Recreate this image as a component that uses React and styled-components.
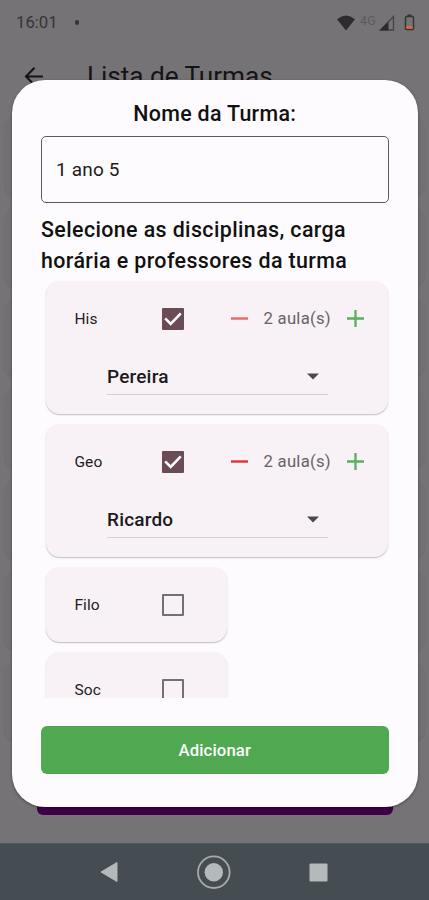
import React from 'react';
import styled, { createGlobalStyle } from 'styled-components';

const GlobalStyle = createGlobalStyle`
  * { box-sizing: border-box; }
  body { margin: 0; background: #767376; font-family: Roboto, sans-serif; }
  button, input { font-family: inherit; }
`;

const Screen = styled.div`
  position: relative;
  width: 429px;
  height: 900px;
  overflow: hidden;
  display: flex;
  flex-direction: column;
  background: #767376;
`;

const StatusBar = styled.div`
  height: 45px;
  flex: none;
  display: flex;
  align-items: center;
  padding: 0 14px 0 16px;
  color: #353336;
  font-size: 16.7px;
  letter-spacing: 0;
`;

const Dot = styled.span`
  width: 4.5px;
  height: 4.5px;
  border-radius: 50%;
  background: #353336;
  margin-left: 17px;
`;

const StatusIcons = styled.div`
  margin-left: auto;
  display: flex;
  align-items: center;
`;

const Network = styled.span`
  font-size: 12.5px;
  color: #5c595c;
  margin: -5px 3px 0 5px;
  letter-spacing: 0.2px;
`;

const BatterySlot = styled.span`
  display: flex;
  margin-left: 9px;
`;

const AppBar = styled.div`
  height: 62px;
  flex: none;
  display: flex;
  align-items: center;
  padding: 0 24px;
  color: #161316;
`;

const AppTitle = styled.h1`
  margin: 0 0 0 43px;
  font-size: 26.2px;
  line-height: 30px;
  font-weight: 400;
  letter-spacing: -0.05px;
`;

const ClassList = styled.div`
  flex: 1;
  min-height: 0;
  overflow: hidden;
  display: flex;
  flex-direction: column;
  gap: 10px;
  padding: 9px 4px 0;
`;

const ClassCard = styled.div`
  height: 80.8px;
  flex: none;
  border-radius: 14px;
  background: #727072;
  box-shadow: 0 1px 1px #6b686b;
`;

const SaveBar = styled.div`
  height: 57px;
  flex: none;
  margin: 0 36px 28px 36.5px;
  border-radius: 6px;
  background: #3f0047;
`;

const NavBar = styled.nav`
  height: 57px;
  flex: none;
  display: flex;
  align-items: center;
  justify-content: space-between;
  padding: 0 101px 0 100px;
  background: #454d52;
  border-top: 1px solid #4d5a59;
`;

const Overlay = styled.div`
  position: absolute;
  inset: 0;
  padding: 79.5px 11.5px 93px 12px;
  display: flex;
`;

const Dialog = styled.section`
  flex: 1;
  display: flex;
  flex-direction: column;
  padding: 21px 29px 33px;
  border-radius: 33px;
  background: #fdfbfe;
  box-shadow: 0 1px 3px rgba(0, 0, 0, 0.4);
`;

const DialogTitle = styled.h2`
  margin: 0;
  text-align: center;
  font-size: 21.4px;
  line-height: 26px;
  font-weight: 500;
  letter-spacing: 0.32px;
  color: #111;
  white-space: nowrap;
`;

const NameInput = styled.input`
  width: 100%;
  height: 67px;
  flex: none;
  margin-top: 9px;
  padding: 0 14px;
  border: 1.2px solid #5e5b5e;
  border-radius: 5px;
  background: transparent;
  font-size: 19px;
  letter-spacing: 0.18px;
  color: #1c1a1d;
  outline: none;
`;

const Prompt = styled.p`
  margin: 11px 0 0;
  font-size: 21.4px;
  line-height: 31px;
  font-weight: 500;
  letter-spacing: 0.39px;
  color: #111;
  white-space: nowrap;
`;

const Subjects = styled.div`
  height: 422px;
  flex: none;
  overflow: hidden;
  display: flex;
  flex-direction: column;
  align-items: flex-start;
  gap: 10px;
  padding: 5px 1px 0 5px;
`;

const SubjectCard = styled.article`
  width: ${(p) => (p.$open ? '100%' : '181px')};
  height: ${(p) => (p.$open ? '133px' : '75px')};
  flex: none;
  border-radius: 14px;
  background: #f8f2f6;
  box-shadow: 0 1px 1.5px rgba(0, 0, 0, 0.25);
`;

const SubjectRow = styled.div`
  height: 75px;
  display: flex;
  align-items: center;
  padding: 1.5px 0 0 28.5px;
`;

const SubjectName = styled.span`
  width: 87px;
  font-size: 15.5px;
  letter-spacing: 0.05px;
  color: #222024;
`;

const CheckBox = styled.span`
  width: 22px;
  height: 22px;
  flex: none;
  display: flex;
  border-radius: 1px;
  border: ${(p) => (p.$checked ? 'none' : '2px solid #737074')};
  background: ${(p) => (p.$checked ? '#6a4c57' : 'transparent')};
`;

const Stepper = styled.div`
  display: flex;
  align-items: center;
  margin-left: 47px;
`;

const Hours = styled.span`
  width: 68px;
  margin: 0 15px 0 16px;
  font-size: 16.7px;
  letter-spacing: 0.26px;
  color: #67636a;
  white-space: nowrap;
`;

const TeacherSelect = styled.div`
  width: 221px;
  height: 39px;
  margin: 0 0 0 61px;
  display: flex;
  align-items: center;
  justify-content: space-between;
  padding: 3px 9px 0 0;
  border-bottom: 1px solid #d5cfd4;
  font-size: 19px;
  font-weight: 500;
  letter-spacing: 0.18px;
  color: #1c1a1d;
`;

const AddButton = styled.button`
  width: 100%;
  height: 48px;
  flex: none;
  margin-top: auto;
  border: 0;
  border-radius: 6px;
  background: #50a951;
  color: #fff;
  font-size: 16.7px;
  font-weight: 500;
  letter-spacing: 0.12px;
`;

const WifiIcon = () => (
  <svg width="18" height="16" viewBox="0 0 18 16">
    <path d="M0 4.2Q9-3.2 18 4.2L9 15.5Z" fill="#2d2b2e" />
  </svg>
);

const SignalIcon = () => (
  <svg width="16" height="16" viewBox="0 0 16 16">
    <path d="M1.5 15H14.5V1.5Z" fill="none" stroke="#454346" strokeWidth="1.3" />
    <path d="M0.5 15.5H9.5V6.5Z" fill="#2d2b2e" />
  </svg>
);

const BatteryIcon = () => (
  <svg width="11" height="17" viewBox="0 0 11 17">
    <path d="M3.5 0.5h4v2h-4z" fill="#353336" />
    <rect x="1.5" y="2.5" width="8" height="13" rx="1" fill="none" stroke="#353336" strokeWidth="1.5" />
    <path d="M2.3 12h6.4v2.7H2.3z" fill="#db693c" />
  </svg>
);

const BackIcon = () => (
  <svg width="20" height="20" viewBox="0 0 20 20" fill="none" stroke="#161316" strokeWidth="2.1">
    <path d="M10.5 1.8 2 10.5l8.5 8.5M2 10.5h17" />
  </svg>
);

const CheckMark = () => (
  <svg width="22" height="22" viewBox="0 0 22 22" fill="none" stroke="#fff" strokeWidth="2.6">
    <path d="m3.2 10.3 5.5 5.5L18.8 5.4" />
  </svg>
);

const MinusIcon = ({ color }) => (
  <svg width="17" height="17" viewBox="0 0 17 17">
    <path d="M0 8.5h17" stroke={color} strokeWidth="2.4" />
  </svg>
);

const PlusIcon = () => (
  <svg width="17" height="17" viewBox="0 0 17 17">
    <path d="M0 8.5h17M8.5 0v17" stroke="#5aaf5c" strokeWidth="2.3" />
  </svg>
);

const CaretIcon = () => (
  <svg width="12" height="7" viewBox="0 0 12 7">
    <path d="M0 .5h12L6 6.5Z" fill="#4c484e" />
  </svg>
);

const NavBackIcon = () => (
  <svg width="18" height="22" viewBox="0 0 18 22">
    <path d="M1 11 17 1.5v19Z" fill="#b4babb" stroke="#b4babb" strokeLinejoin="round" />
  </svg>
);

const NavHomeIcon = () => (
  <svg width="35" height="35" viewBox="0 0 35 35">
    <circle cx="17.8" cy="17.2" r="15.8" fill="none" stroke="#a5abad" strokeWidth="1.8" />
    <circle cx="17.8" cy="17.2" r="9.2" fill="#b4babb" />
  </svg>
);

const NavRecentIcon = () => (
  <svg width="19" height="19" viewBox="0 0 19 19">
    <rect x=".5" y=".5" width="18" height="18" rx="1" fill="#b4babb" />
  </svg>
);

const subjects = [
  { name: 'His', teacher: 'Pereira', hours: 2, minus: '#ee665f' },
  { name: 'Geo', teacher: 'Ricardo', hours: 2, minus: '#dc3034' },
  { name: 'Filo' },
  { name: 'Soc' },
];

const Subject = ({ name, teacher, hours, minus }) => (
  <SubjectCard $open={!!teacher}>
    <SubjectRow>
      <SubjectName>{name}</SubjectName>
      <CheckBox $checked={!!teacher}>{teacher && <CheckMark />}</CheckBox>
      {teacher && (
        <Stepper>
          <MinusIcon color={minus} />
          <Hours>{hours} aula(s)</Hours>
          <PlusIcon />
        </Stepper>
      )}
    </SubjectRow>
    {teacher && (
      <TeacherSelect>
        {teacher}
        <CaretIcon />
      </TeacherSelect>
    )}
  </SubjectCard>
);

export default function App() {
  return (
    <>
      <GlobalStyle />
      <Screen>
        <StatusBar>
          16:01
          <Dot />
          <StatusIcons>
            <WifiIcon />
            <Network>4G</Network>
            <SignalIcon />
            <BatterySlot>
              <BatteryIcon />
            </BatterySlot>
          </StatusIcons>
        </StatusBar>
        <AppBar>
          <BackIcon />
          <AppTitle>Lista de Turmas</AppTitle>
        </AppBar>
        <ClassList>
          {[0, 1, 2, 3, 4, 5, 6].map((i) => (
            <ClassCard key={i} />
          ))}
        </ClassList>
        <SaveBar />
        <NavBar>
          <NavBackIcon />
          <NavHomeIcon />
          <NavRecentIcon />
        </NavBar>
        <Overlay>
          <Dialog>
            <DialogTitle>Nome da Turma:</DialogTitle>
            <NameInput defaultValue="1 ano 5" />
            <Prompt>
              Selecione as disciplinas, carga
              <br />
              horária e professores da turma
            </Prompt>
            <Subjects>
              {subjects.map((s) => (
                <Subject key={s.name} {...s} />
              ))}
            </Subjects>
            <AddButton>Adicionar</AddButton>
          </Dialog>
        </Overlay>
      </Screen>
    </>
  );
}
